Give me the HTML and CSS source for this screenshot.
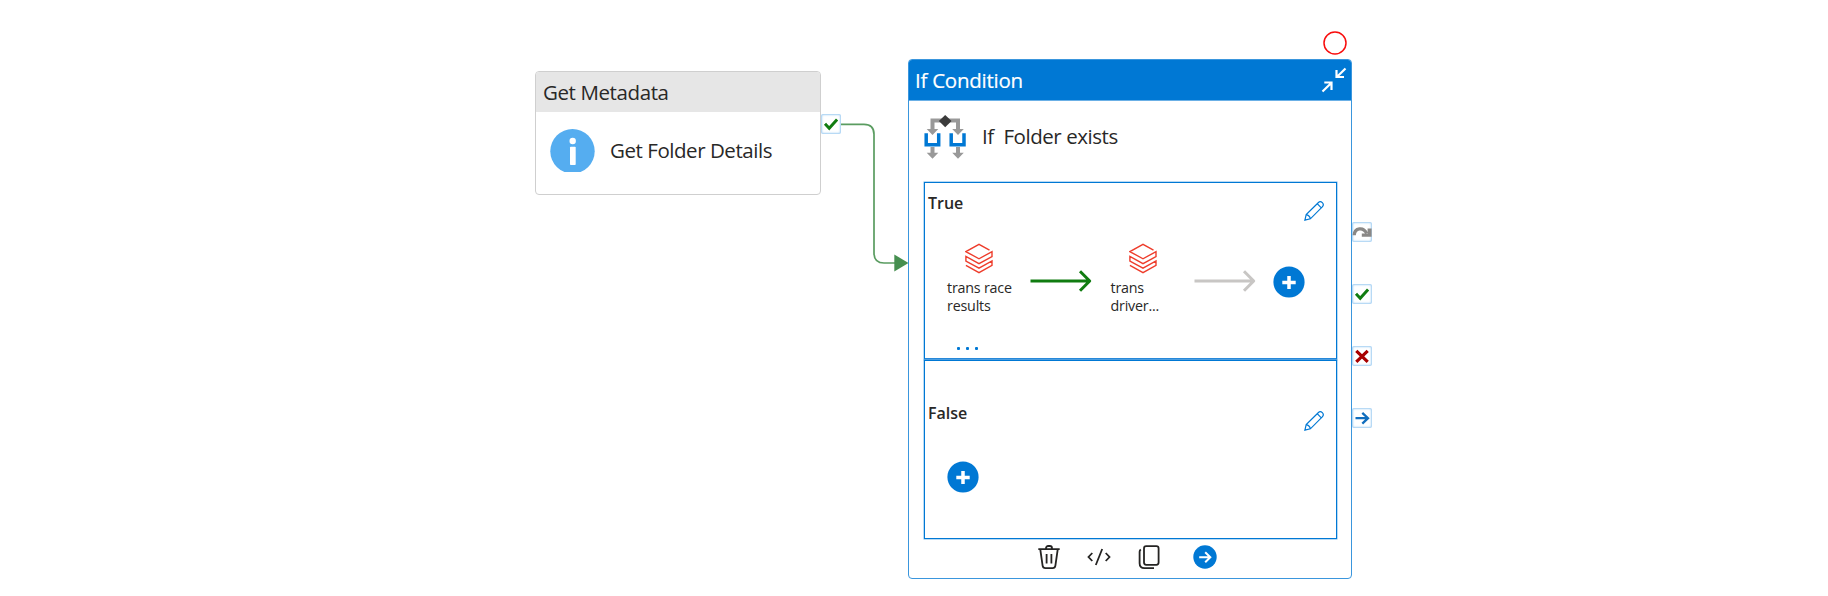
FILE: index.html
```html
<!DOCTYPE html>
<html lang="en">
<head>
<meta charset="utf-8">
<title>Pipeline canvas</title>
<link rel="stylesheet" href="styles.css">
</head>
<body>
<svg class="defs" width="0" height="0" aria-hidden="true">
  <symbol id="stack" viewBox="0 0 28 31">
    <path d="M24.500 7.200 14 1.400.9 8.600 14 15.800 27 8.600v4.900L14 20.700.9 13.500v4.600L14 25.200 27 18v4.400L14 29.600.9 22.400"/>
  </symbol>
  <symbol id="pencil" viewBox="0 0 20 20">
    <path d="M.9 19.100 2.200 13.600 14.200 1.700a2.900 2.900 0 0 1 4.100 0 2.900 2.900 0 0 1 0 4.100L6.400 17.800ZM2.200 13.600q3.300.6 4.200 4.200M13.200 2.700l4.100 4.100"/>
  </symbol>
  <symbol id="check" viewBox="0 0 20 20">
    <path d="m4 9.800 4.200 4.400 7.900-8.700"/>
  </symbol>
  <symbol id="long-arrow" viewBox="0 0 62 24">
    <path d="M.5 12H59M50 2.200 59.700 12 50 21.800"/>
  </symbol>
</svg>
<main class="canvas">
  <svg class="wire" viewBox="0 0 70 152">
    <path class="wire-line" d="M0 4.300H24Q34 4.300 34 14.300V133Q34 143 44 143H56"/>
    <path class="wire-head" d="M54.300 134.600 68.500 143 54.300 151.500Z"/>
  </svg>

  <section class="node metadata">
    <header class="node-head">Get Metadata</header>
    <div class="node-row">
      <svg class="info" viewBox="0 0 45 43">
        <circle cx="22.500" cy="22.200" r="22.200" fill="#55adf0"/>
        <circle cx="22.700" cy="12" r="3.200" fill="#fff"/>
        <rect x="20" y="17.700" width="5.700" height="18.300" rx=".8" fill="#fff"/>
      </svg>
      <span class="name">Get Folder Details</span>
    </div>
  </section>

  <section class="node condition">
    <header class="node-head">
      <span class="title">If Condition</span>
      <svg class="collapse" viewBox="0 0 26 26">
        <path d="M24.500 1.500 15.800 10M15.500 3V10H23M1.500 24.500 10.500 15.800M3.300 15.500H10.500V23"/>
      </svg>
    </header>
    <div class="node-row">
      <svg class="branch" viewBox="0 0 42 44">
        <path d="M8.500 15V5.500H34V15M8.500 32V40M34 32V40" fill="none" stroke="#999" stroke-width="4"/>
        <path d="M2.700 14H14.300L8.500 20ZM28.200 14H39.800L34 20ZM2.700 37.700H14.300L8.500 43.700ZM28.200 37.700H39.800L34 43.700Z" fill="#999"/>
        <path d="M2.200 18.300V29.700H14.700V18.300M27.200 18.300V29.700H40V18.300" fill="none" stroke="#0078d4" stroke-width="3.500"/>
        <path d="m21.200 0 6.300 6-6.300 6.200L14.900 6Z" fill="#3b3b3b"/>
      </svg>
      <span class="name">If&nbsp; Folder exists</span>
    </div>
    <div class="branches">
      <div class="case case-true">
        <div class="case-head"><span>True</span><svg class="pencil"><use href="#pencil"/></svg></div>
        <div class="flow">
          <div class="activity"><svg class="stack"><use href="#stack"/></svg><span>trans race</span><span>results</span></div>
          <svg class="long-arrow green"><use href="#long-arrow"/></svg>
          <div class="activity"><svg class="stack"><use href="#stack"/></svg><span>trans</span><span>driver...</span></div>
          <svg class="long-arrow grey"><use href="#long-arrow"/></svg>
          <svg class="plus" viewBox="0 0 32 32"><circle cx="16" cy="16" r="15.600"/><path d="M16 10V23M9.300 16.500H22.700"/></svg>
        </div>
        <div class="more"><i></i><i></i><i></i></div>
      </div>
      <div class="case case-false">
        <div class="case-head"><span>False</span><svg class="pencil"><use href="#pencil"/></svg></div>
        <svg class="plus" viewBox="0 0 32 32"><circle cx="16" cy="16" r="15.600"/><path d="M16 10V23M9.300 16.500H22.700"/></svg>
      </div>
    </div>
    <footer class="tools">
      <svg class="tool" viewBox="0 0 24 26"><path d="M1.300 5.200H22.700M9 5V4.200a2.200 2.200 0 0 1 2.200-2.200h1.600A2.200 2.200 0 0 1 15 4.200V5M3.300 5.500 5.600 21.700Q6 24.200 8.400 24.200h7.200q2.400 0 2.800-2.500L20.700 5.500M9.600 10V19.500M14.400 10V19.500"/></svg>
      <svg class="tool" viewBox="0 0 24 26"><path d="M5.300 9 1.500 13l3.800 4M18.700 9l3.800 4-3.800 4M15.200 5 8.800 21"/></svg>
      <svg class="tool" viewBox="0 0 24 26"><rect x="7" y="2.200" width="14.600" height="18.600" rx="2.200"/><path d="M3.800 5.500Q2.600 6.300 2.600 7.800V19.300q0 4.900 4.900 4.900H17"/></svg>
      <svg class="tool run" viewBox="0 0 24 24"><circle cx="12" cy="12" r="11.700"/><path d="M6.200 12.200H17M12.200 7.200l5.100 5-5.100 5"/></svg>
    </footer>
  </section>

  <svg class="breakpoint" viewBox="0 0 24 24"><circle cx="12" cy="12" r="11"/></svg>
  <svg class="port port-source check" viewBox="0 0 20 20"><use href="#check"/></svg>
  <svg class="port port-skip" viewBox="0 0 20 20"><path d="M2.200 13.300C2.500 5.500 11.500 4.500 14.700 11.500" fill="none" stroke="#8a8886" stroke-width="3.300"/><path d="M15.600 6.500h4v8.200H9.800v-3.200h5.800Z" fill="#8a8886"/></svg>
  <svg class="port port-success check" viewBox="0 0 20 20"><use href="#check"/></svg>
  <svg class="port port-fail" viewBox="0 0 20 20"><path d="m4.300 4.800 11.400 11.100M15.700 4.800 4.300 15.900"/></svg>
  <svg class="port port-done" viewBox="0 0 20 20"><path d="M3.500 10.200H15.800M10.300 4.800l5.700 5.400-5.700 5.400"/></svg>
</main>
</body>
</html>
```
FILE: styles.css
```css
* { box-sizing: border-box; }
body { margin: 0; background: #fff; color: #292827; font-family: "Open Sans", "Noto Sans", sans-serif; }
svg { display: block; flex: none; }
.defs { position: absolute; }
.canvas { position: relative; width: 1828px; height: 596px; overflow: hidden; }

.node { position: absolute; background: #fff; border-radius: 4px; overflow: hidden; }
.node-head { display: flex; align-items: center; font-size: 20.500px; letter-spacing: -.4px; line-height: 28px; white-space: nowrap; }
.node-row { display: flex; align-items: flex-start; }
.name { font-size: 20.500px; letter-spacing: -.45px; line-height: 28px; white-space: nowrap; }

.metadata { left: 535px; top: 71px; width: 286px; height: 124px; border: 1px solid #cfcfcf; }
.metadata .node-head { height: 40px; padding: 0 7px; background: #e6e6e6; }
.metadata .node-row { padding: 17px 0 0 14px; }
.info { width: 45px; height: 43px; margin-right: 15px; }
.metadata .name { margin-top: 7px; }

.condition { left: 908px; top: 59px; width: 444px; height: 520px; border: 1px solid #3a96dd; display: flex; flex-direction: column; }
.condition .node-head { height: 41px; flex: none; padding: 0 4px 0 6px; background: #0078d4; color: #fff; justify-content: space-between; border-bottom: 1px solid #6bb0e6; }
.title { letter-spacing: -.25px; -webkit-text-stroke: .2px #fff; }
.collapse { width: 26px; height: 26px; fill: none; stroke: #fff; stroke-width: 2.200; }
.condition .node-row { height: 81px; flex: none; padding: 14px 0 0 15px; }
.branch { width: 42px; height: 44px; margin-right: 16px; }
.condition .name { margin-top: 7px; }

.branches { margin-left: 15px; width: 413px; flex: none; }
.case { border: 1px solid #0078d4; box-shadow: 0 0 0 .5px #72b5e9; }
.case-true { height: 178px; border-bottom: 2px solid #2788d9; }
.case-false { height: 179px; }
.case-head { display: flex; justify-content: space-between; padding: 8px 12px 0 3px; font-size: 16px; font-weight: 600; line-height: 24px; }
.case-false .case-head { padding-top: 40px; }
.pencil { width: 20px; height: 20px; margin-top: 10px; fill: none; stroke: #0078d4; stroke-width: 1.200; }
.flow { display: flex; height: 92px; padding: 22px 0 0 22px; }
.activity { width: 83px; display: flex; flex-direction: column; align-items: flex-start; font-size: 14.300px; letter-spacing: -.2px; line-height: 18px; white-space: nowrap; }
.stack { width: 28px; height: 31px; margin: 0 0 5px 18px; fill: none; stroke: #ee3d2c; stroke-width: 1.400; }
.long-arrow { width: 62px; height: 24px; margin: 26px 18.500px 0 0; fill: none; stroke-width: 3; stroke-linejoin: round; }
.green { stroke: #107c10; }
.grey { stroke: #c8c6c4; }
.plus { width: 32px; height: 32px; fill: #0078d4; }
.plus path { stroke: #fff; stroke-width: 3.500; }
.flow .plus { margin: 23px 0 0 -1px; }
.case-false .plus { margin: 30px 0 0 21.500px; }
.more { display: flex; gap: 6px; margin: 34px 0 0 32px; }
.more i { width: 3px; height: 3px; background: #0078d4; border-radius: 1px; }

.tools { display: flex; gap: 26px; padding: 5px 0 0 128px; }
.tool { width: 24px; height: 26px; fill: none; stroke: #252423; stroke-width: 1.800; }
.run { height: 24px; margin: 1px 0 0 6px; stroke: #fff; stroke-width: 2; }
.run circle { fill: #0078d4; stroke: none; }

.wire { position: absolute; left: 840px; top: 120px; width: 70px; height: 152px; }
.wire-line { fill: none; stroke: #5a9c60; stroke-width: 1.700; }
.wire-head { fill: #468f50; }
.breakpoint { position: absolute; left: 1323px; top: 31px; width: 24px; height: 24px; fill: none; stroke: #f80d0d; stroke-width: 1.500; }
.port { position: absolute; left: 1352px; width: 20px; height: 20px; background: #fff; border-radius: 2px; box-shadow: inset 0 0 2px 1px #9fcdf2; fill: none; stroke-width: 3; }
.port-source { left: 821px; top: 114px; }
.port-skip { top: 222px; }
.port-success { top: 284px; }
.port-fail { top: 346px; stroke: #a80000; stroke-width: 3.200; }
.port-done { top: 408px; stroke: #106ebe; stroke-width: 2.300; }
.check { stroke: #107c10; }
```
